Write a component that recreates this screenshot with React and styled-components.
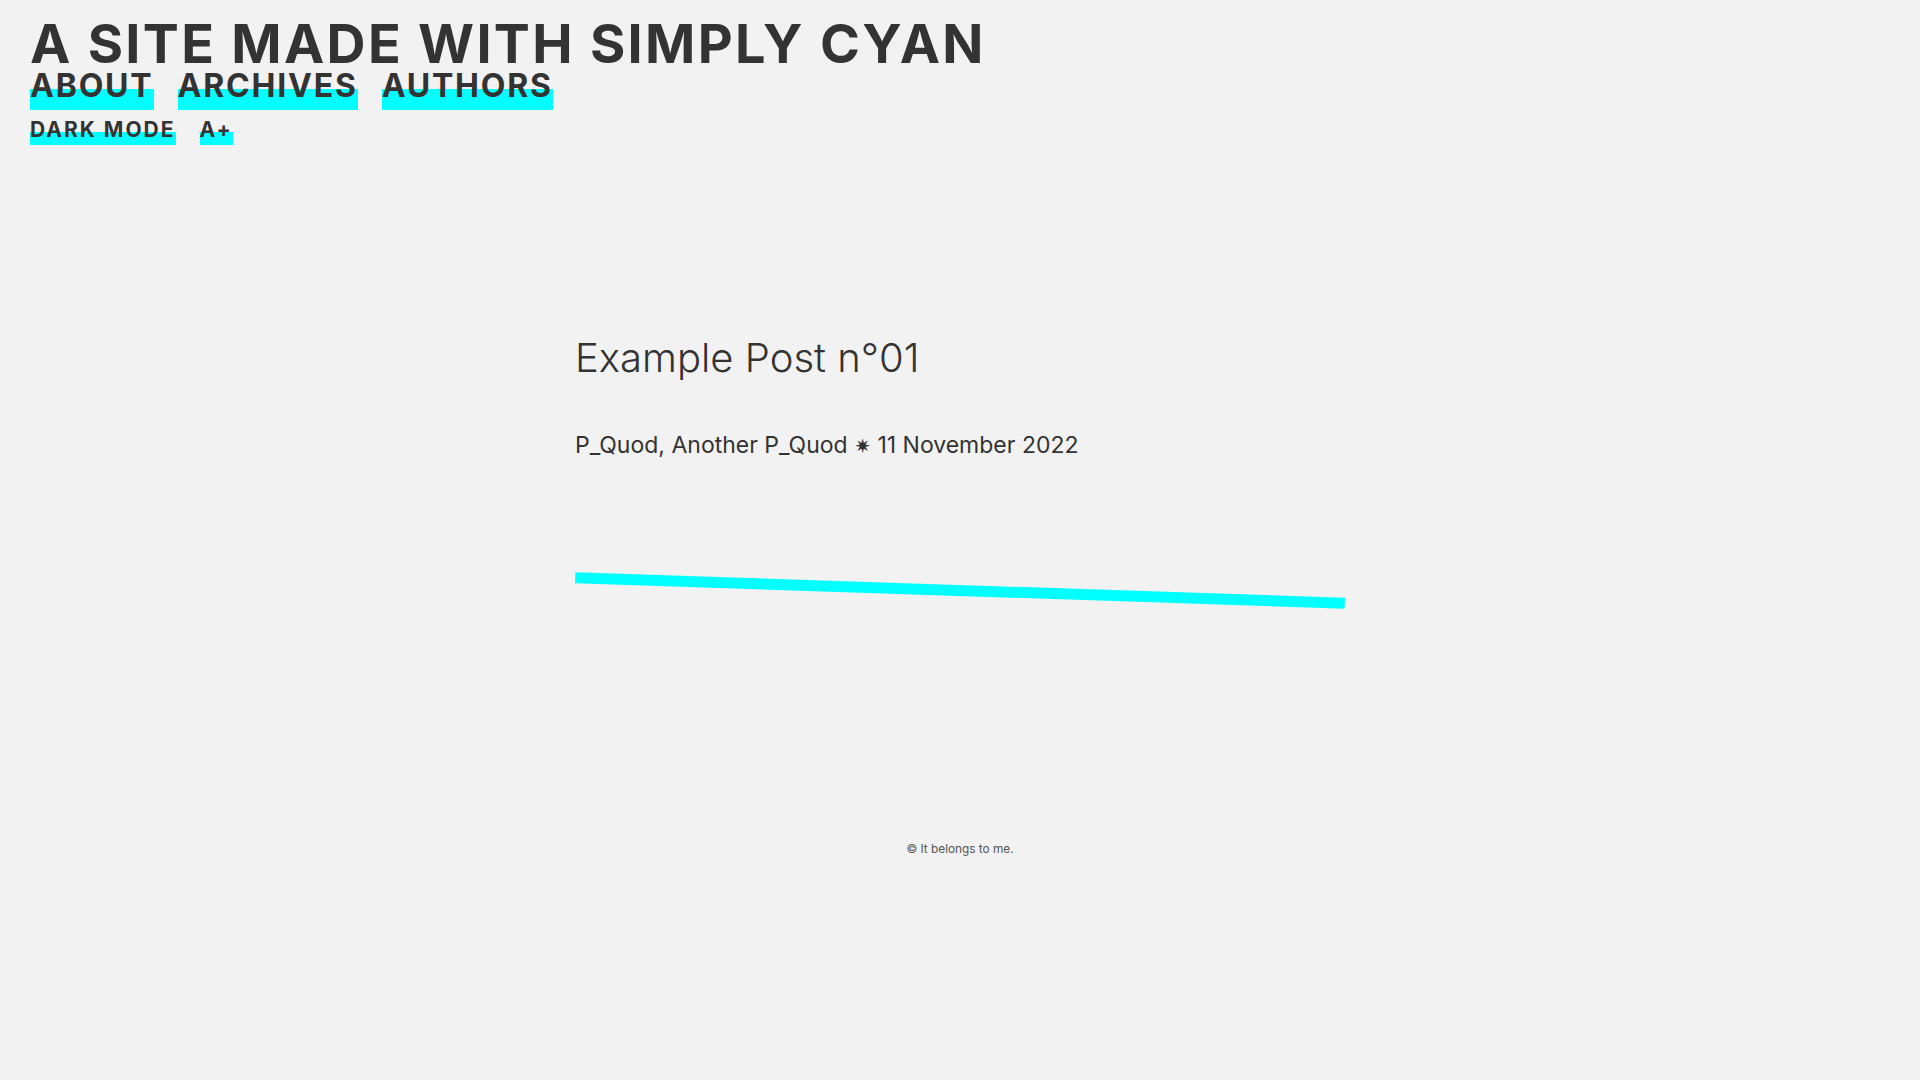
import React from 'react';
import styled, { createGlobalStyle } from 'styled-components';

const GlobalStyle = createGlobalStyle`
  html, body {
    margin: 0;
    padding: 0;
    background: #f2f2f2;
    color: #333;
    font-family: Inter, "Open Sans", sans-serif;
  }
  * { box-sizing: border-box; }
`;

const Page = styled.div`
  min-height: 1080px;
`;

const Header = styled.header`
  padding: 21px 30px 0;
`;

const SiteTitle = styled.h1`
  margin: 0;
  font-size: 54px;
  line-height: 46px;
  font-weight: 700;
  letter-spacing: 2.3px;
`;

const NavRow = styled.nav`
  display: flex;
  gap: 24px;
  margin-top: ${props => props.top || 0}px;
`;

const NavLink = styled.a`
  display: inline-block;
  color: #333;
  text-decoration: none;
  font-weight: 700;
  font-size: ${props => (props.small ? 21 : 32)}px;
  line-height: ${props => (props.small ? 24 : 38)}px;
  padding-bottom: ${props => (props.small ? 3 : 5)}px;
  letter-spacing: ${props => (props.small ? 2 : 1.8)}px;
  background: linear-gradient(
    to bottom,
    transparent ${props => (props.small ? 52 : 51)}%,
    #00ffff ${props => (props.small ? 52 : 51)}%
  );
  cursor: pointer;
`;

const Main = styled.main`
  width: 770px;
  margin: 0 auto;
  padding-top: 189px;
`;

const PostTitle = styled.h2`
  margin: 0;
  font-size: 40px;
  line-height: 48px;
  font-weight: 300;
`;

const Meta = styled.p`
  margin: 49px 0 0;
  font-size: 23px;
  line-height: 28px;
  font-weight: 400;
`;

const Star = styled.span`
  font-family: "DejaVu Sans", sans-serif;
  font-size: 20px;
`;

const Divider = styled.hr`
  border: none;
  height: 11px;
  width: 770px;
  margin: 125px 0 0;
  background: #00ffff;
  transform: rotate(1.9deg);
`;

const Footer = styled.footer`
  text-align: center;
  margin-top: 246px;
  font-size: 11.8px;
  color: #555;
`;

export default function App() {
  return (
    <Page>
      <GlobalStyle />
      <Header>
        <SiteTitle>A SITE MADE WITH SIMPLY CYAN</SiteTitle>
        <NavRow>
          <NavLink>ABOUT</NavLink>
          <NavLink>ARCHIVES</NavLink>
          <NavLink>AUTHORS</NavLink>
        </NavRow>
        <NavRow top={8}>
          <NavLink small>DARK MODE</NavLink>
          <NavLink small>A+</NavLink>
        </NavRow>
      </Header>
      <Main>
        <PostTitle>Example Post n°01</PostTitle>
        <Meta>
          P_Quod, Another P_Quod <Star>✷</Star> 11 November 2022
        </Meta>
        <Divider />
      </Main>
      <Footer>© It belongs to me.</Footer>
    </Page>
  );
}
